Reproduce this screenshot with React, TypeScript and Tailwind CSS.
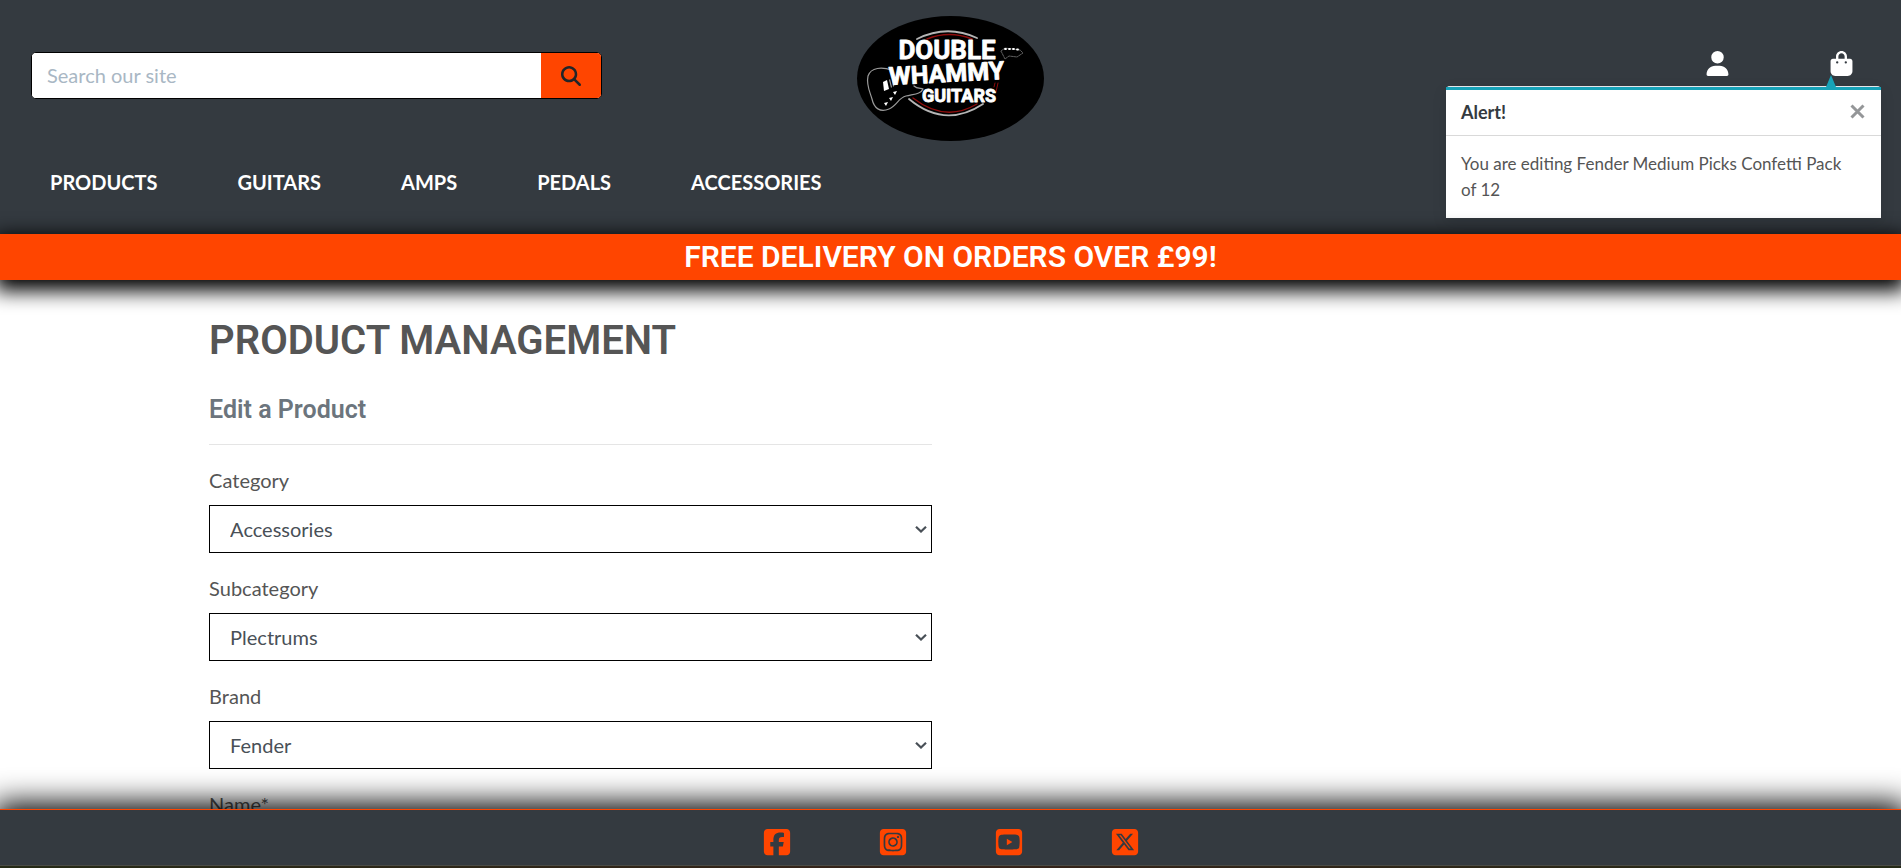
import {
  FaBagShopping,
  FaMagnifyingGlass,
  FaSquareFacebook,
  FaSquareInstagram,
  FaSquareXTwitter,
  FaSquareYoutube,
  FaUser,
} from "react-icons/fa6";

const navItems = ["Products", "Guitars", "Amps", "Pedals", "Accessories"];

const selectFields = [
  { id: "category", label: "Category", options: ["Accessories", "Guitars", "Amps", "Pedals"] },
  { id: "subcategory", label: "Subcategory", options: ["Plectrums", "Strings", "Straps"] },
  { id: "brand", label: "Brand", options: ["Fender", "Gibson", "Ibanez"] },
];

const socials = [
  { name: "Facebook", Icon: FaSquareFacebook },
  { name: "Instagram", Icon: FaSquareInstagram },
  { name: "YouTube", Icon: FaSquareYoutube },
  { name: "X", Icon: FaSquareXTwitter },
];

function Logo() {
  return (
    <svg width="187" height="125" viewBox="0 0 187 125" role="img" aria-label="Double Whammy Guitars">
      <ellipse cx="93.5" cy="62.5" rx="93.5" ry="62.5" fill="#000" />
      <g fill="none" strokeLinecap="round">
        <path d="M60 23 Q90 8 120 22" stroke="#b5b5b5" strokeWidth="1.8" />
        <path d="M70 23 Q92 14 115 23" stroke="#8f0c0c" strokeWidth="1.6" />
        <path d="M52 83 Q88 113 126 88" stroke="#b5b5b5" strokeWidth="1.8" />
        <path d="M56 82 Q88 107 120 88" stroke="#8f0c0c" strokeWidth="1.4" />
        <path d="M141 67 l-2 9 M138 67 l-1 4" stroke="#8f0c0c" strokeWidth="1" />
        <path
          d="M35 54 C25 51 14 51 11 60 C9 69 13 76 15 83 C17 92 23 97 32 93 C40 90 41 82 49 80 C57 78 64 78 66 73 C64 72 60 73 57 70"
          stroke="#9a9a9a"
          strokeWidth="1.2"
        />
        <path d="M144 35 L148 32 L163 34 L166 37 L160 41 L152 40 L148 43 Z" stroke="#777" strokeWidth="0.8" strokeDasharray="2 1" />
        <path d="M148 33 h1 M152 33 h1 M156 33 h1 M160 33.5 h1" stroke="#fff" strokeWidth="1.8" />
      </g>
      <g fill="#fff">
        <path d="M26 66 l4 -2 l2 9 l-5 2 Z" />
        <path d="M32 64 l1 -1 l2 8 l-1 1 Z M35 63 l1 0 l1 7 l-1 1 Z" opacity="0.6" />
        <path d="M36 76 l4 -1 l-2 4 Z M32 82 l4 -1 l-2 4 Z M27 87 l4 -1 l-2 4 Z" />
      </g>
      <g
        fill="#fff"
        stroke="#fff"
        strokeWidth="0.8"
        strokeLinejoin="round"
        fontFamily="Roboto, sans-serif"
        fontWeight="700"
        textAnchor="middle"
      >
        <text x="90" y="43" fontSize="26">DOUBLE</text>
        <text x="90" y="66" fontSize="25" transform="rotate(-3 90 66)">
          WHAMMY
        </text>
        <text x="102" y="86" fontSize="18">GUITARS</text>
      </g>
    </svg>
  );
}

function Toast() {
  return (
    <div
      role="alert"
      className="absolute top-[86px] right-5 z-30 w-[435px] rounded-t-[4px] border-t border-gray-200 bg-white shadow-[0_5px_15px_rgba(0,0,0,0.1)]"
    >
      <div className="absolute -top-3 right-[45px] h-0 w-0 border-x-5 border-b-12 border-x-transparent border-b-[#17a2b8]" />
      <div className="h-[3px] bg-[#17a2b8]" />
      <div className="flex h-[46px] items-center justify-between border-b border-[#d9d9d9] pr-4 pb-[2px] pl-[15px]">
        <strong className="text-lg font-bold text-[#343a40]">Alert!</strong>
        <button type="button" aria-label="Close" className="text-[#949698]">
          <svg width="15" height="15" viewBox="0 0 15 15" fill="none" stroke="currentColor" strokeWidth="3">
            <path d="M1.5 1.5 L13.5 13.5 M13.5 1.5 L1.5 13.5" />
          </svg>
        </button>
      </div>
      <p className="pt-[15px] pr-[30px] pb-[15px] pl-[15px] text-[17px] leading-[26px] text-[#555]">
        You are editing Fender Medium Picks Confetti Pack of 12
      </p>
    </div>
  );
}

export default function App() {
  return (
    <div className="flex h-screen flex-col overflow-hidden bg-white font-['Lato',sans-serif] text-[20px] leading-[30px] text-[#555]">
      <header className="relative z-20 bg-[#343a40]">
        <div className="grid h-[157px] grid-cols-3 items-start">
          <form className="mt-[52px] ml-[31px] flex h-[47px] w-[571px] max-w-full overflow-hidden rounded-[5px] border border-black bg-white">
            <input
              type="search"
              aria-label="Search our site"
              placeholder="Search our site"
              className="min-w-0 flex-1 bg-white px-[15px] pb-[2px] text-[#495057] outline-none placeholder:text-[#a9b7c4]"
            />
            <button type="submit" aria-label="Search" className="flex w-[60px] items-center justify-center bg-[#ff4500] text-[#212529]">
              <FaMagnifyingGlass size={20} />
            </button>
          </form>
          <a href="#home" className="mt-4 justify-self-center">
            <Logo />
          </a>
          <div className="mt-[51px] mr-[47px] flex gap-[99px] justify-self-end text-white">
            <a href="#account" aria-label="My account">
              <FaUser size={25} />
            </a>
            <a href="#bag" aria-label="Shopping bag">
              <FaBagShopping size={25} />
            </a>
          </div>
        </div>
        <nav className="flex h-[77px] items-start gap-20 px-[50px] pt-[10px]">
          {navItems.map((item) => (
            <a key={item} href={`#${item.toLowerCase()}`} className="font-bold text-white uppercase">
              {item}
            </a>
          ))}
        </nav>
        <Toast />
      </header>

      <div className="relative z-20 flex h-[46px] shrink-0 items-center justify-center bg-[#ff4500] shadow-[0_6px_20px_5px_#000]">
        <h2 className="font-['Roboto',sans-serif] text-[30px] leading-9 font-semibold text-white">
          FREE DELIVERY ON ORDERS OVER £99!
        </h2>
      </div>

      <main className="min-h-0 flex-1 overflow-hidden">
        <div className="mx-[11%] pt-[37px] lg:w-[723px]">
          <h1 className="font-['Roboto',sans-serif] text-[40px] leading-[48px] font-semibold">PRODUCT MANAGEMENT</h1>
          <h2 className="mt-[30px] border-b border-[#e5e5e5] pb-[19px] font-['Roboto',sans-serif] text-[25px] leading-[30px] font-semibold text-[#6c757d]">
            Edit a Product
          </h2>
          <form className="mt-5 flex flex-col gap-5">
            {selectFields.map((field) => (
              <div key={field.id} className="flex flex-col gap-[10px]">
                <label htmlFor={field.id}>{field.label}</label>
                <div className="grid items-center">
                  <select
                    id={field.id}
                    className="col-start-1 row-start-1 h-12 w-full appearance-none border border-black bg-white pr-6 pl-5 text-[#495057]"
                  >
                    {field.options.map((option) => (
                      <option key={option}>{option}</option>
                    ))}
                  </select>
                  <svg
                    className="pointer-events-none col-start-1 row-start-1 mr-[5px] justify-self-end text-[#495057]"
                    width="12"
                    height="8"
                    viewBox="0 0 12 8"
                    fill="none"
                    stroke="currentColor"
                    strokeWidth="2.2"
                    aria-hidden="true"
                  >
                    <path d="M1 1.7 L6 6.5 L11 1.7" />
                  </svg>
                </div>
              </div>
            ))}
            <div className="flex flex-col gap-[10px]">
              <label htmlFor="name">Name*</label>
              <input
                id="name"
                type="text"
                defaultValue="Fender Medium Picks Confetti Pack of 12"
                className="h-12 w-full border border-black px-5 text-[#495057]"
              />
            </div>
          </form>
        </div>
      </main>

      <footer className="relative z-10 shrink-0 border-t border-[#ff4500] bg-[#343a40] shadow-[0_0_30px_6px_#000]">
        <div className="flex h-14 items-end justify-center gap-[86px] border-b border-[#4a4b46] pb-2 text-[#ff4500]">
          {socials.map(({ name, Icon }) => (
            <a key={name} href={`#${name.toLowerCase()}`} aria-label={name}>
              <Icon size={30} />
            </a>
          ))}
        </div>
        <div className="h-[2px] bg-linear-to-r from-[#252a17] via-[#36231a] to-[#252a17]" />
      </footer>
    </div>
  );
}
